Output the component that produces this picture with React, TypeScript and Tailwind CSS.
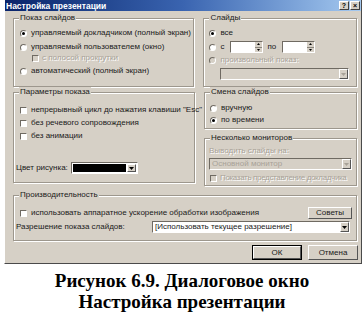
import React from 'react';

const ui = { fontFamily: '"Liberation Sans", Arial, sans-serif' };

function Radio({ checked, disabled }: { checked?: boolean; disabled?: boolean }) {
  return (
    <span
      className={`relative inline-flex items-center justify-center w-[7px] h-[7px] rounded-full border border-t-[#6f6a62] border-l-[#6f6a62] border-b-white border-r-white shrink-0 ${
        disabled ? 'bg-[#d6d0c6]' : 'bg-white'
      }`}
    >
      {checked && <span className="w-[3px] h-[3px] rounded-full bg-black" />}
    </span>
  );
}

function Check({ disabled }: { disabled?: boolean }) {
  return (
    <span
      className={`inline-block w-[7px] h-[7px] border border-t-[#6f6a62] border-l-[#6f6a62] border-b-white border-r-white shrink-0 ${
        disabled ? 'bg-[#d6d0c6]' : 'bg-white'
      }`}
    />
  );
}

function Label({ children, disabled }: { children: React.ReactNode; disabled?: boolean }) {
  return (
    <span
      className={`whitespace-nowrap ${disabled ? 'text-[#a8a298] [text-shadow:1px_1px_0_#fff]' : 'text-[#1a1a1a]'}`}
    >
      {children}
    </span>
  );
}

function Group({
  title,
  className,
  children,
}: {
  title: string;
  className?: string;
  children: React.ReactNode;
}) {
  return (
    <div
      className={`relative border border-[#9d978d] shadow-[inset_1px_1px_0_#fff,1px_1px_0_#fff] ${className ?? ''}`}
    >
      <span className="absolute -top-[6px] left-[5px] px-[1px] bg-[#d6d0c6] leading-[10px] text-[#1a1a1a] whitespace-nowrap">
        {title}
      </span>
      {children}
    </div>
  );
}

function DropArrow({ disabled }: { disabled?: boolean }) {
  return (
    <span className="flex items-center justify-center w-[9px] h-full bg-[#d6d0c6] border border-t-white border-l-white border-b-[#555] border-r-[#555] shrink-0">
      <svg width="5" height="3" viewBox="0 0 5 3">
        <path d="M0 0h5L2.5 3z" fill={disabled ? '#a8a298' : '#000'} />
      </svg>
    </span>
  );
}

function Select({
  text,
  disabled,
  className,
}: {
  text?: string;
  disabled?: boolean;
  className?: string;
}) {
  return (
    <div
      className={`flex h-[12px] border border-t-[#6f6a62] border-l-[#6f6a62] border-b-white border-r-white ${
        disabled ? 'bg-[#d6d0c6]' : 'bg-white'
      } ${className ?? ''}`}
    >
      <span
        className={`flex-1 pl-[2px] leading-[10px] whitespace-nowrap overflow-hidden ${
          disabled ? 'text-[#a8a298]' : 'text-[#1a1a1a]'
        }`}
      >
        {text}
      </span>
      <DropArrow disabled={disabled} />
    </div>
  );
}

function Spin() {
  return (
    <div className="flex w-[33px] h-[12px] bg-white border border-t-[#6f6a62] border-l-[#6f6a62] border-b-white border-r-white">
      <span className="flex-1" />
      <span className="flex flex-col w-[7px] h-full">
        <span className="flex-1 flex items-center justify-center bg-[#d6d0c6] border-b border-[#8a857c]">
          <svg width="3" height="2" viewBox="0 0 3 2">
            <path d="M1.5 0L3 2H0z" fill="#000" />
          </svg>
        </span>
        <span className="flex-1 flex items-center justify-center bg-[#d6d0c6]">
          <svg width="3" height="2" viewBox="0 0 3 2">
            <path d="M0 0h3L1.5 2z" fill="#000" />
          </svg>
        </span>
      </span>
    </div>
  );
}

function Button({ children, isDefault, className }: { children: React.ReactNode; isDefault?: boolean; className?: string }) {
  return (
    <div className={`${isDefault ? 'border border-black' : ''} ${className ?? ''}`}>
      <div className="h-full flex items-center justify-center bg-[#d6d0c6] border border-t-white border-l-white border-b-[#555] border-r-[#555] leading-[10px] text-[#1a1a1a]">
        {children}
      </div>
    </div>
  );
}

export default function App() {
  return (
    <div className="w-[364px] h-[326px] bg-white overflow-hidden">
      <div
        className="ml-[4px] w-[358px] h-[264px] flex flex-col bg-[#d6d0c6] border-l border-white border-r border-b border-r-[#4a4a4a] border-b-[#4a4a4a] text-[8px]"
        style={ui}
      >
        {/* title bar */}
        <div className="h-[11px] flex items-center bg-gradient-to-r from-[#0a246a] via-[#3a64b0] to-[#a6caf0] pl-[1px] pr-[1px]">
          <span className="flex-1 text-white font-bold text-[8.5px] leading-[10px] whitespace-nowrap">
            Настройка презентации
          </span>
          <span className="w-[10px] h-[9px] flex items-center justify-center bg-[#d6d0c6] border border-t-white border-l-white border-b-[#404040] border-r-[#404040] text-[7px] font-bold leading-none">
            ?
          </span>
          <span className="ml-[1px] w-[10px] h-[9px] flex items-center justify-center bg-[#d6d0c6] border border-t-white border-l-white border-b-[#404040] border-r-[#404040] text-[7px] font-bold leading-none">
            ×
          </span>
        </div>

        <div className="flex flex-col pl-[8px] pr-[4px] pt-[7px]">
          {/* row 1 */}
          <div className="flex gap-[9px] h-[69px]">
            <Group title="Показ слайдов" className="w-[182px] h-[69px]">
              <div className="flex flex-col pt-[9px] pl-[6px]">
                <div className="flex items-center gap-[4px] h-[10px]">
                  <Radio checked />
                  <Label>управляемый докладчиком (полный экран)</Label>
                </div>
                <div className="flex items-center gap-[4px] h-[10px] mt-[4px]">
                  <Radio />
                  <Label>управляемый пользователем (окно)</Label>
                </div>
                <div className="flex items-center gap-[3px] h-[10px] mt-[1px] pl-[12px]">
                  <Check disabled />
                  <Label disabled>с полосой прокрутки</Label>
                </div>
                <div className="flex items-center gap-[4px] h-[10px] mt-[3px]">
                  <Radio />
                  <Label>автоматический (полный экран)</Label>
                </div>
              </div>
            </Group>
            <Group title="Слайды" className="w-[154px] h-[69px]">
              <div className="flex flex-col pt-[9px] pl-[5px]">
                <div className="flex items-center gap-[4px] h-[10px]">
                  <Radio checked />
                  <Label>все</Label>
                </div>
                <div className="flex items-center h-[12px] mt-[3px]">
                  <Radio />
                  <span className="ml-[4px] w-[10px]">
                    <Label>с</Label>
                  </span>
                  <Spin />
                  <span className="ml-[4px] w-[15px]">
                    <Label>по</Label>
                  </span>
                  <Spin />
                </div>
                <div className="flex items-center gap-[4px] h-[10px] mt-[2px]">
                  <Radio disabled />
                  <Label disabled>произвольный показ:</Label>
                </div>
                <Select disabled className="mt-[3px] ml-[11px] w-[129px]" />
              </div>
            </Group>
          </div>

          {/* row 2 */}
          <div className="flex gap-[9px] mt-[5px] h-[94px]">
            <Group title="Параметры показа" className="w-[182px] h-[91px]">
              <div className="flex flex-col pt-[12px] pl-[6px]">
                <div className="flex items-center gap-[4px] h-[10px]">
                  <Check />
                  <Label>непрерывный цикл до нажатия клавиши "Esc"</Label>
                </div>
                <div className="flex items-center gap-[4px] h-[10px] mt-[3px]">
                  <Check />
                  <Label>без речевого сопровождения</Label>
                </div>
                <div className="flex items-center gap-[4px] h-[10px] mt-[3px]">
                  <Check />
                  <Label>без анимации</Label>
                </div>
                <div className="flex items-center h-[12px] mt-[21px] -ml-[4px]">
                  <span className="w-[55px]">
                    <Label>Цвет рисунка:</Label>
                  </span>
                  <div className="flex h-[12px] w-[67px] bg-white border border-t-[#6f6a62] border-l-[#6f6a62] border-b-white border-r-white p-[1px]">
                    <span className="flex-1 bg-black" />
                    <span className="ml-[1px] h-full flex">
                      <DropArrow />
                    </span>
                  </div>
                </div>
              </div>
            </Group>
            <div className="flex flex-col w-[154px]">
              <Group title="Смена слайдов" className="h-[37px]">
                <div className="flex flex-col pt-[10px] pl-[5px]">
                  <div className="flex items-center gap-[4px] h-[10px]">
                    <Radio />
                    <Label>вручную</Label>
                  </div>
                  <div className="flex items-center gap-[4px] h-[10px] mt-[2px]">
                    <Radio checked />
                    <Label>по времени</Label>
                  </div>
                </div>
              </Group>
              <Group title="Несколько мониторов" className="mt-[9px] h-[48px]">
                <div className="flex flex-col pt-[7px] pl-[4px]">
                  <div className="h-[10px] leading-[10px]">
                    <Label disabled>Выводить слайды на:</Label>
                  </div>
                  <Select disabled text="Основной монитор" className="mt-[2px] w-[143px]" />
                  <div className="flex items-center gap-[3px] h-[10px] mt-[3px] pl-[1px] tracking-[-0.35px]">
                    <Check disabled />
                    <Label disabled>Показать представление докладчика</Label>
                  </div>
                </div>
              </Group>
            </div>
          </div>

          {/* row 3 */}
          <Group title="Производительность" className="mt-[9px] h-[46px]">
            <div className="flex flex-col pt-[11px] pl-[6px] pr-[4px]">
              <div className="flex items-center h-[12px]">
                <Check />
                <span className="ml-[4px] flex-1">
                  <Label>использовать аппаратное ускорение обработки изображения</Label>
                </span>
                <Button className="w-[44px] h-[12px]">Советы</Button>
              </div>
              <div className="flex items-center h-[12px] mt-[2px] -ml-[4px]">
                <span className="w-[136px]">
                  <Label>Разрешение показа слайдов:</Label>
                </span>
                <Select text="[Использовать текущее разрешение]" className="w-[198px]" />
              </div>
            </div>
          </Group>

          {/* buttons */}
          <div className="flex justify-end gap-[6px] mt-[4px] -mr-[1px]">
            <Button isDefault className="w-[50px] h-[15px]">
              ОК
            </Button>
            <Button className="w-[50px] h-[15px]">Отмена</Button>
          </div>
        </div>
      </div>

      <div className="mt-[6px] text-center font-bold text-[19px] leading-[21px] text-black font-['Liberation_Serif','DejaVu_Serif',serif]">
        <div>Рисунок 6.9. Диалоговое окно</div>
        <div>Настройка презентации</div>
      </div>
    </div>
  );
}
